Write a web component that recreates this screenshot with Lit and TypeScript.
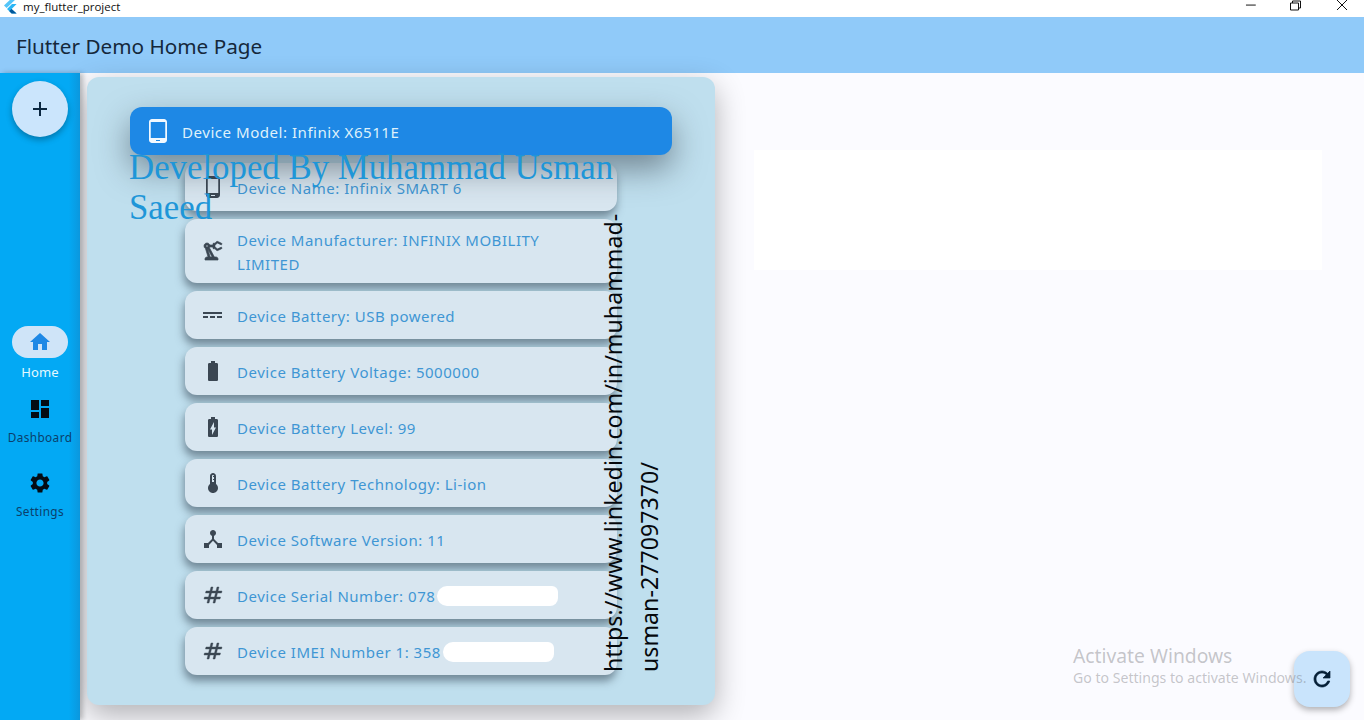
import { LitElement, html, css, svg } from "lit";
import { customElement } from "lit/decorators.js";

const P = {
  tablet: "M18 0H6C4.34 0 3 1.34 3 3v18c0 1.66 1.34 3 3 3h12c1.66 0 3-1.34 3-3V3c0-1.66-1.34-3-3-3zm-4 22h-4v-1h4v1zm5.25-3H4.75V3h14.5v16z",
  phone: "M16 1H8C6.34 1 5 2.34 5 4v16c0 1.66 1.34 3 3 3h8c1.66 0 3-1.34 3-3V4c0-1.66-1.34-3-3-3zm-2 20h-4v-1h4v1zm3.25-3H6.75V4h10.5v14z",
  robot: "M19.93,8.35l-3.6,1.68L14,7.7V6.3l2.33-2.33l3.6,1.68c0.38,0.18,0.82,0.01,1-0.36c0.18-0.38,0.01-0.82-0.36-1l-3.92-1.83 c-0.38-0.18-0.83-0.1-1.13,0.2L13.78,4.4C13.6,4.16,13.32,4,13,4c-0.55,0-1,0.45-1,1v1H8.82C8.4,4.84,7.3,4,6,4C4.34,4,3,5.34,3,7 c0,1.1,0.6,2.05,1.48,2.58L7.08,18H6c-1.1,0-2,0.9-2,2v1h13v-1c0-1.1-0.9-2-2-2h-1.62L8.41,8.77C8.58,8.53,8.72,8.28,8.82,8H12v1 c0,0.55,0.45,1,1,1c0.32,0,0.6-0.16,0.78-0.4l1.74,1.74c0.3,0.3,0.75,0.38,1.13,0.2l3.92-1.83c0.38-0.18,0.54-0.62,0.36-1 C20.75,8.34,20.31,8.17,19.93,8.35z M6,8C5.45,8,5,7.55,5,7c0-0.55,0.45-1,1-1s1,0.45,1,1C7,7.55,6.55,8,6,8z M11.11,18H9.17 l-2.46-8h0.1L11.11,18z",
  power: "M2 9v2h19V9H2zm0 6h5v-2H2v2zm7 0h5v-2H9v2zm7 0h5v-2h-5v2z",
  battery: "M15.67 4H14V2h-4v2H8.33C7.6 4 7 4.6 7 5.33v15.33C7 21.4 7.6 22 8.33 22h7.33c.74 0 1.34-.6 1.34-1.33V5.33C17 4.6 16.4 4 15.67 4z",
  charging: "M15.67 4H14V2h-4v2H8.33C7.6 4 7 4.6 7 5.33v15.33C7 21.4 7.6 22 8.33 22h7.33c.74 0 1.34-.6 1.34-1.33V5.33C17 4.6 16.4 4 15.67 4zM11 20v-5.5H9L13 7v5.5h2L11 20z",
  thermo: "M15 13V5c0-1.66-1.34-3-3-3S9 3.34 9 5v8c-1.21.91-2 2.37-2 4 0 2.76 2.24 5 5 5s5-2.24 5-5c0-1.63-.79-3.09-2-4zm-4-8c0-.55.45-1 1-1s1 .45 1 1h-1v1h1v2h-1v1h1v2h-2V5z",
  hub: "M17 16l-4-4V8.82C14.16 8.4 15 7.3 15 6c0-1.66-1.34-3-3-3S9 4.34 9 6c0 1.3.84 2.4 2 2.82V12l-4 4H3v5h5v-3.05l4-4.2 4 4.2V21h5v-5h-4z",
  tag: "M20.5 10l.5-2h-4l1-4h-2l-1 4h-4l1-4h-2L9 8H5l-.5 2h4l-1 4h-4L3 16h4l-1 4h2l1-4h4l-1 4h2l1-4h4l.5-2h-4l1-4h4zm-7 4h-4l1-4h4l-1 4z",
  home: "M10 20v-6h4v6h5v-8h3L12 3 2 12h3v8z",
  dash: "M3 13h8V3H3v10zm0 8h8v-6H3v6zm10 0h8V11h-8v10zm0-18v6h8V3h-8z",
  gear: "M19.14,12.94c0.04-0.3,0.06-0.61,0.06-0.94c0-0.32-0.02-0.64-0.07-0.94l2.03-1.58c0.18-0.14,0.23-0.41,0.12-0.61 l-1.92-3.32c-0.12-0.22-0.37-0.29-0.59-0.22l-2.39,0.96c-0.5-0.38-1.03-0.7-1.62-0.94L14.4,2.81c-0.04-0.24-0.24-0.41-0.48-0.41 h-3.84c-0.24,0-0.43,0.17-0.47,0.41L9.25,5.35C8.66,5.59,8.12,5.92,7.63,6.29L5.24,5.33c-0.22-0.08-0.47,0-0.59,0.22L2.74,8.87 C2.62,9.08,2.66,9.34,2.86,9.48l2.03,1.58C4.84,11.36,4.8,11.69,4.8,12s0.02,0.64,0.07,0.94l-2.03,1.58 c-0.18,0.14-0.23,0.41-0.12,0.61l1.92,3.32c0.12,0.22,0.37,0.29,0.59,0.22l2.39-0.96c0.5,0.38,1.03,0.7,1.62,0.94l0.36,2.54 c0.05,0.24,0.24,0.41,0.48,0.41h3.84c0.24,0,0.44-0.17,0.47-0.41l0.36-2.54c0.59-0.24,1.13-0.56,1.62-0.94l2.39,0.96 c0.22,0.08,0.47,0,0.59-0.22l1.92-3.32c0.12-0.22,0.07-0.47-0.12-0.61L19.14,12.94z M12,15.6c-1.98,0-3.6-1.62-3.6-3.6 s1.62-3.6,3.6-3.6s3.6,1.62,3.6,3.6S13.98,15.6,12,15.6z",
  refresh: "M17.65 6.35C16.2 4.9 14.21 4 12 4c-4.42 0-7.99 3.58-7.99 8s3.57 8 7.99 8c3.73 0 6.84-2.55 7.73-6h-2.08c-.82 2.33-3.04 4-5.65 4-3.31 0-6-2.69-6-6s2.69-6 6-6c1.66 0 3.14.69 4.22 1.78L13 11h7V4l-2.35 2.35z",
  add: "M19 13h-6v6h-2v-6H5v-2h6V5h2v6h6v2z",
};

const icon = (d: string, cls = "") =>
  html`<svg class="ic ${cls}" viewBox="0 0 24 24" fill="currentColor" stroke="currentColor" stroke-width=${d === P.robot || d === P.refresh ? 0.7 : d === P.tag ? 0.4 : 0}>${svg`<path d=${d}></path>`}</svg>`;

const ROWS: { i: string; t: string; blob?: number; gap?: number }[] = [
  { i: P.phone, t: "Device Name: Infinix SMART 6" },
  { i: P.robot, t: "Device Manufacturer: INFINIX MOBILITY LIMITED" },
  { i: P.power, t: "Device Battery: USB powered" },
  { i: P.battery, t: "Device Battery Voltage: 5000000" },
  { i: P.charging, t: "Device Battery Level: 99" },
  { i: P.thermo, t: "Device Battery Technology: Li-ion" },
  { i: P.hub, t: "Device Software Version: 11" },
  { i: P.tag, t: "Device Serial Number: 078", blob: 121, gap: 2 },
  { i: P.tag, t: "Device IMEI Number 1: 358", blob: 111, gap: 2 },
];

@customElement("app-root")
export class AppRoot extends LitElement {
  static styles = css`
    :host { display: block; width: 1364px; height: 720px; overflow: hidden; position: relative;
      font-family: "Noto Sans", "Open Sans", sans-serif; background: #fbfbff; }
    * { box-sizing: border-box; }
    .ic { width: 24px; height: 24px; flex: none; display: block; }
    .titlebar { height: 17px; background: #fff; display: flex; align-items: center; overflow: hidden; position: relative; }
    .logo { width: 16px; height: 17px; margin-left: 2px; flex: none; }
    .apptitle { margin-left: 5px; font-size: 11.5px; line-height: 13px; color: #111; margin-top: -5px; font-family: "Open Sans", sans-serif; }
    .winctl { margin-left: auto; display: flex; height: 17px; }
    .winctl svg { display: block; width: 46px; height: 17px; }
    .appbar { height: 56px; background: #90caf9; display: flex; align-items: center; padding: 1px 0 0 16px;
      font-size: 20.7px; color: #15283b; }
    .body { display: flex; height: 647px; position: relative; }
    .rail { width: 80px; flex: none; background: linear-gradient(90deg, #03a9f4 0, #03a9f4 86%, #0b97dd 100%);
      box-shadow: 3px 0 5px rgba(0,0,0,.25); position: relative; z-index: 2; display: flex; flex-direction: column; align-items: center; padding-top: 8px; }
    .addfab { width: 56px; height: 56px; border-radius: 50%; background: #cbe5fc; color: #0b2740; display: flex; align-items: center; justify-content: center;
      box-shadow: 0 3px 6px rgba(0,0,0,.3); }
    .dests { margin-top: 189px; display: flex; flex-direction: column; align-items: center; width: 100%; }
    .dest { display: flex; flex-direction: column; align-items: center; width: 100%; height: 74px; color: #0b3f6b; font-size: 11.8px; letter-spacing: .4px; }
    .dest .lab { margin-top: 7px; line-height: 18px; }
    .dest .ic { color: #040c14; }
    .dest.first { height: 71px; }
    .pill { width: 56px; height: 32px; border-radius: 16px; background: #cfe4f8; display: flex; align-items: center; justify-content: center; }
    .dest .pill .ic { color: #1e88e5; }
    .dest.first .lab { margin-top: 5px; color: #e4f9ff; font-size: 13px; letter-spacing: .1px; }
    .main { flex: 1; display: flex; padding: 4px 0 0 7px; align-items: flex-start; }
    .card { width: 628px; height: 628px; flex: none; background: #bfdfee; border-radius: 12px; padding: 30px 43px 0;
      box-shadow: 0 10px 30px rgba(0,0,0,.3); position: relative; }
    .head { height: 48px; background: #1e88e5; border-radius: 12px; display: flex; align-items: center; gap: 12px; padding: 1px 16px 0; color: #dff1fb;
      font-size: 15.1px; letter-spacing: .5px; position: relative; z-index: 1; box-shadow: 0 14px 32px rgba(40,50,60,.5); }
    .head .ic { color: #f2f9ff; margin-bottom: 1px; }
    .list { margin: 8px 55px 0; display: flex; flex-direction: column; gap: 8px; }
    .row { min-height: 48px; background: #d8e6f0; border-radius: 12px; display: flex; align-items: center; gap: 12px; padding: 8px 24px 7px 16px;
      color: #3f96d4; font-size: 15px; line-height: 24px; letter-spacing: .52px; box-shadow: -1px 6px 8px rgba(50,65,80,.55); }
    .row .ic { color: #3b4753; margin-bottom: 1px; }
    .row .txt { flex: 1; padding-top: 1px; }
    .blob { display: inline-block; height: 20px; background: #fff; border-radius: 10px 6px 8px 10px; vertical-align: middle; margin-top: -6px; margin-bottom: -2px; }
    .dev { position: absolute; left: 42px; top: 71px; width: 520px; font-family: "Liberation Serif", serif; font-size: 34.8px; line-height: 40px; color: #1e96d8; z-index: 2; }
    .link { position: absolute; left: 508px; top: 140px; height: 455px; writing-mode: vertical-rl; transform: rotate(180deg); font-size: 23.2px; line-height: 36px;
      color: #05080c; z-index: 2; }
    .panel { width: 568px; height: 120px; background: #fff; margin: 73px 0 0 39px; flex: none; }
    .fab { position: absolute; left: 1294px; top: 651px; width: 56px; height: 56px; border-radius: 16px; background: #c9e4fc; color: #061f36; display: flex; align-items: center; justify-content: center;
      box-shadow: 0 3px 6px rgba(0,0,0,.3); }
    .wm { position: absolute; left: 1073px; top: 643px; color: rgba(120,120,125,.42); pointer-events: none; z-index: 3; }
    .wm .a { font-size: 19.3px; line-height: 25px; }
    .wm .b { font-size: 14.1px; line-height: 20px; }
  `;

  render() {
    return html`
      <div class="titlebar">
        <svg class="logo" viewBox="0 0 16 17">
          <path d="M11 -3 L2 5.5 L4.6 8.1 L16 -3 Z" fill="#54c5f8"></path>
          <path d="M10 4 L5 9 L9.6 13.5 L14.6 13.5 L9.6 9 L14.6 4 Z" fill="#29b6f6"></path>
          <path d="M7.2 11.1 L9.6 13.5 L14.6 13.5 L9.6 9 Z" fill="#01579b"></path>
        </svg>
        <span class="apptitle">my_flutter_project</span>
        <div class="winctl">
          <svg viewBox="0 0 46 17" style="width:45px"><path d="M1 5 H11" stroke="#111" stroke-width="1"></path></svg>
          <svg viewBox="0 0 46 17"><path d="M1.5 3.5 H9.5 V10.5 H1.5 Z M3.5 3.5 V1.5 H11.5 V8.5 H9.5" transform="translate(-1 -.5)" fill="none" stroke="#111" stroke-width="1"></path></svg>
          <svg viewBox="0 0 28 17" style="width:28px"><path d="M1 0 L11 10 M11 0 L1 10" stroke="#111" stroke-width="1"></path></svg>
        </div>
      </div>
      <div class="appbar">Flutter Demo Home Page</div>
      <div class="body">
        <nav class="rail">
          <div class="addfab">${icon(P.add)}</div>
          <div class="dests">
            <div class="dest first"><div class="pill">${icon(P.home)}</div><span class="lab">Home</span></div>
            <div class="dest">${icon(P.dash)}<span class="lab">Dashboard</span></div>
            <div class="dest">${icon(P.gear)}<span class="lab">Settings</span></div>
          </div>
        </nav>
        <main class="main">
          <section class="card">
            <div class="head">${icon(P.tablet)}<span>Device Model: Infinix X6511E</span></div>
            <div class="list">
              ${ROWS.map(
                (r) => html`<div class="row">${icon(r.i)}<span class="txt">${r.t}${r.blob
                  ? html`<span class="blob" style="width:${r.blob}px;margin-left:${r.gap}px"></span>`
                  : ""}</span></div>`
              )}
            </div>
            <div class="dev">Developed By Muhammad Usman Saeed</div>
            <div class="link">https://www.linkedin.com/in/muhammad-usman-277097370/</div>
          </section>
          <div class="panel"></div>
        </main>
      </div>
      <div class="fab">${icon(P.refresh)}</div>
      <div class="wm">
        <div class="a">Activate Windows</div>
        <div class="b">Go to Settings to activate Windows.</div>
      </div>
    `;
  }
}
